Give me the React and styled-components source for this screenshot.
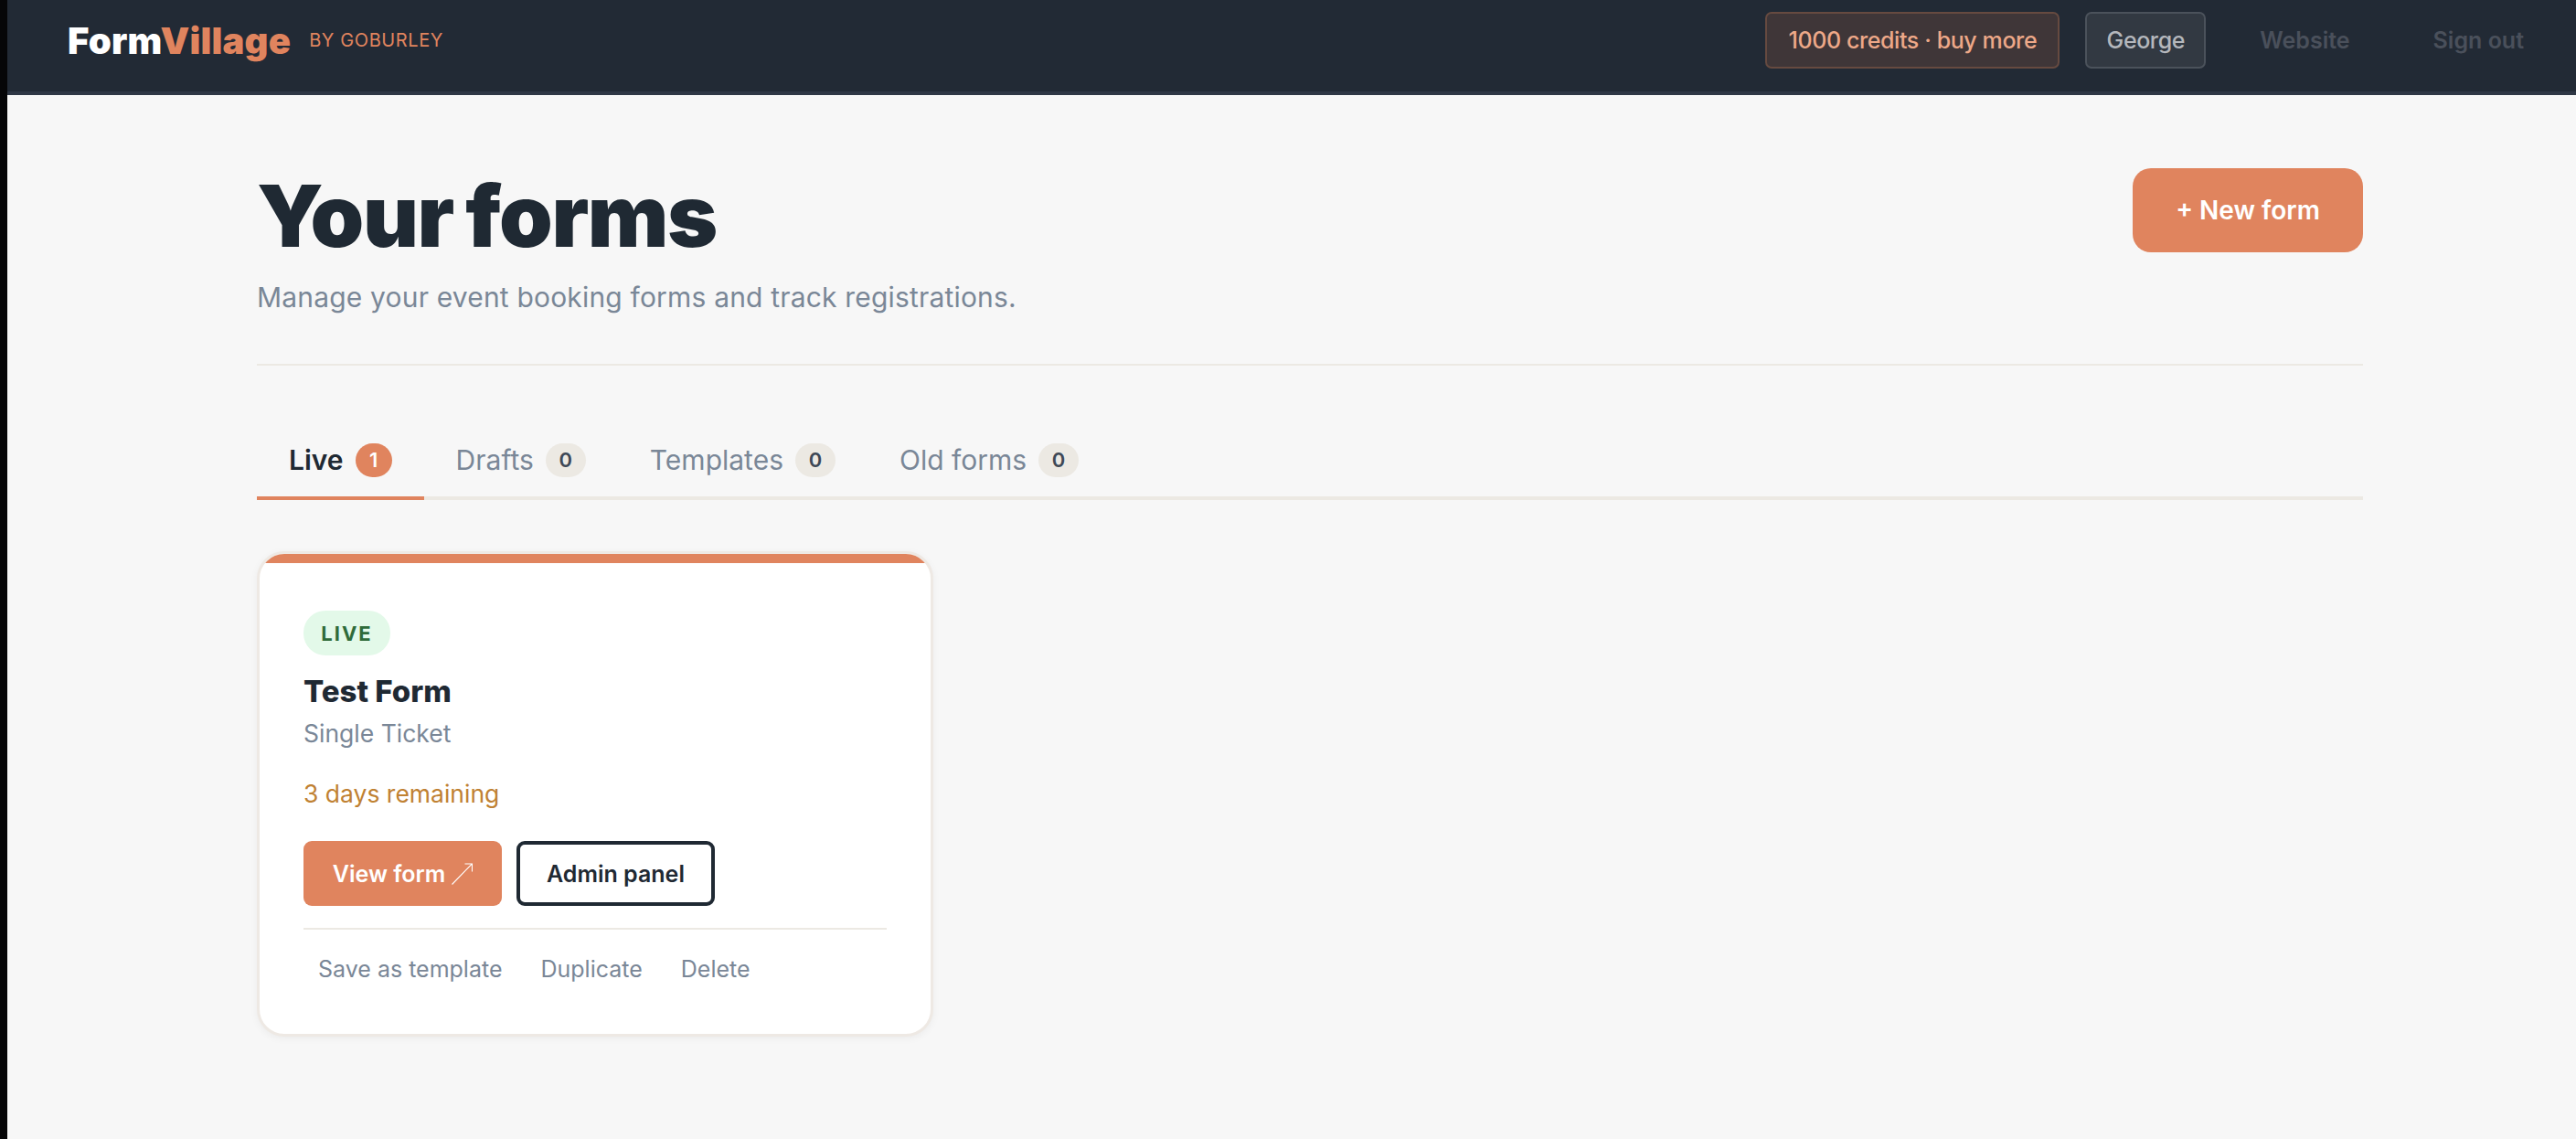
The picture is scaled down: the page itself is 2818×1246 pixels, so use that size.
import styled, { createGlobalStyle } from "styled-components";

const GlobalStyle = createGlobalStyle`
  * { box-sizing: border-box; }
  html, body { margin: 0; padding: 0; }
  body {
    background: #f7f7f7;
    font-family: "Inter", "Liberation Sans", sans-serif;
  }
`;

const tabs = [
  { label: "Live", count: 1, active: true },
  { label: "Drafts", count: 0 },
  { label: "Templates", count: 0 },
  { label: "Old forms", count: 0 },
];

const App = () => {
  return (
    <Page>
      <GlobalStyle />
      <Strip />
      <Main>
        <Header>
          <Brand>
            <Logo>
              Form<span>Village</span>
            </Logo>
            <ByLine>BY GOBURLEY</ByLine>
          </Brand>
          <Nav>
            <Credits>1000 credits · buy more</Credits>
            <UserChip>George</UserChip>
            <NavLink>Website</NavLink>
            <NavLink>Sign out</NavLink>
          </Nav>
        </Header>

        <Content>
          <TitleRow>
            <div>
              <Title>Your forms</Title>
              <Subtitle>Manage your event booking forms and track registrations.</Subtitle>
            </div>
            <NewButton>+ New form</NewButton>
          </TitleRow>

          <TabBar>
            {tabs.map((tab) => (
              <Tab key={tab.label} $active={tab.active}>
                {tab.label}
                <Count $active={tab.active}>{tab.count}</Count>
              </Tab>
            ))}
          </TabBar>

          <Card>
            <CardBody>
              <StatusPill>LIVE</StatusPill>
              <FormName>Test Form</FormName>
              <FormType>Single Ticket</FormType>
              <Remaining>3 days remaining</Remaining>
              <Buttons>
                <ViewButton>
                  View form
                  <svg width="23" height="24" viewBox="0 0 23 24" fill="none" stroke="#fff" strokeWidth="1.1">
                    <path d="M0.5 23.5 L22.5 0.8 M14.5 1 H22.5 V9.5" />
                  </svg>
                </ViewButton>
                <AdminButton>Admin panel</AdminButton>
              </Buttons>
              <Actions>
                <ActionLink>Save as template</ActionLink>
                <ActionLink>Duplicate</ActionLink>
                <ActionLink>Delete</ActionLink>
              </Actions>
            </CardBody>
          </Card>
        </Content>
      </Main>
    </Page>
  );
};

const Page = styled.div`
  display: flex;
  min-height: 1246px;
`;

const Strip = styled.div`
  width: 8px;
  flex-shrink: 0;
  background: #060608;
`;

const Main = styled.div`
  flex: 1;
  min-width: 0;
`;

const Header = styled.header`
  display: flex;
  align-items: center;
  justify-content: space-between;
  height: 104px;
  padding: 0 57px 12px 66px;
  background: #222a35;
  border-bottom: 4px solid #2f3745;
`;

const Brand = styled.div`
  display: flex;
  align-items: center;
  gap: 20px;
`;

const Logo = styled.div`
  font-size: 40px;
  font-weight: 900;
  letter-spacing: 0.2px;
  color: #fff;

  span {
    color: #e0845e;
  }
`;

const ByLine = styled.div`
  font-size: 20px;
  letter-spacing: 0.6px;
  color: #e0845e;
`;

const Nav = styled.nav`
  display: flex;
  align-items: center;
`;

const NavButton = styled.div`
  height: 62px;
  display: flex;
  align-items: center;
  border-radius: 7px;
  font-size: 25px;
  font-weight: 500;
  letter-spacing: -0.4px;
`;

const Credits = styled(NavButton)`
  width: 322px;
  justify-content: center;
  background: #3f3638;
  border: 2px solid #664a40;
  color: #eda888;
`;

const UserChip = styled(NavButton)`
  width: 132px;
  justify-content: center;
  margin-left: 28px;
  background: #323942;
  border: 2px solid #4b525b;
  color: #b4b7bc;
`;

const NavLink = styled.div`
  margin-left: 59px;
  font-size: 25px;
  font-weight: 600;
  color: #4a505b;

  & + & {
    margin-left: 91px;
  }
`;

const Content = styled.main`
  padding: 80px 233px 0 273px;
`;

const TitleRow = styled.div`
  display: flex;
  justify-content: space-between;
  align-items: flex-start;
  padding-bottom: 51px;
  border-bottom: 2px solid #ece9e3;
`;

const Title = styled.h1`
  margin: 0;
  font-size: 94px;
  font-weight: 900;
  line-height: 104px;
  letter-spacing: -1.4px;
  word-spacing: -4px;
  color: #1f2933;
`;

const Subtitle = styled.p`
  margin: 15px 0 0;
  font-size: 30px;
  line-height: 44px;
  letter-spacing: 0.18px;
  color: #7a8797;
`;

const NewButton = styled.button`
  width: 252px;
  height: 92px;
  border: none;
  border-radius: 20px;
  background: #e0845e;
  color: #fff;
  font-family: inherit;
  font-size: 28px;
  font-weight: 600;
`;

const TabBar = styled.div`
  display: flex;
  margin-top: 69px;
  border-bottom: 4px solid #ece9e3;
`;

const Tab = styled.div`
  display: flex;
  align-items: center;
  gap: 13px;
  height: 78px;
  margin-bottom: -4px;
  padding: 0 35px 6px;
  font-size: 30px;
  font-weight: ${(p) => (p.$active ? 600 : 400)};
  color: ${(p) => (p.$active ? "#1f2933" : "#7a8797")};
  border-bottom: 4px solid ${(p) => (p.$active ? "#e0845e" : "transparent")};
`;

const Count = styled.span`
  display: flex;
  align-items: center;
  justify-content: center;
  width: ${(p) => (p.$active ? "40px" : "44px")};
  height: 37px;
  border-radius: 20px;
  font-size: 22px;
  font-weight: 600;
  background: ${(p) => (p.$active ? "#e0845e" : "#ece9e3")};
  color: ${(p) => (p.$active ? "#fff" : "#3e4856")};
`;

const Card = styled.article`
  width: 740px;
  margin-top: 56px;
  border: 3px solid #eee9e4;
  border-radius: 30px;
  background: #fff;
  box-shadow: 0 2px 8px rgba(0, 0, 0, 0.05);
  overflow: hidden;
`;

const CardBody = styled.div`
  display: flex;
  flex-direction: column;
  align-items: flex-start;
  padding: 52px 48px 39px;
  border-top: 10px solid #e0845e;
`;

const StatusPill = styled.span`
  display: flex;
  align-items: center;
  justify-content: center;
  width: 95px;
  height: 49px;
  border-radius: 24px;
  background: #e3f9e9;
  color: #2f6b3a;
  font-size: 22px;
  font-weight: 700;
  letter-spacing: 2px;
`;

const FormName = styled.h2`
  margin: 16px 0 0;
  font-size: 33px;
  font-weight: 800;
  line-height: 46px;
  color: #1f2933;
`;

const FormType = styled.div`
  margin-top: 3px;
  font-size: 26.5px;
  line-height: 40px;
  color: #7a8797;
`;

const Remaining = styled.div`
  margin-top: 26px;
  font-size: 26.5px;
  line-height: 40px;
  color: #c08132;
`;

const Buttons = styled.div`
  display: flex;
  gap: 16px;
  margin-top: 32px;
`;

const Button = styled.button`
  display: flex;
  align-items: center;
  justify-content: center;
  width: 217px;
  height: 71px;
  border-radius: 9px;
  font-family: inherit;
  font-size: 25px;
  font-weight: 600;
`;

const ViewButton = styled(Button)`
  gap: 7px;
  border: none;
  background: #e0845e;
  color: #fff;
`;

const AdminButton = styled(Button)`
  border: 4px solid #1f2933;
  background: #fff;
  color: #1f2933;
`;

const Actions = styled.div`
  display: flex;
  align-self: stretch;
  gap: 10px;
  margin-top: 24px;
  padding-top: 11px;
  border-top: 2px solid #ece9e3;
`;

const ActionLink = styled.span`
  padding: 12px 16px;
  font-size: 25px;
  line-height: 40px;
  color: #7a8797;
`;

export default App;
